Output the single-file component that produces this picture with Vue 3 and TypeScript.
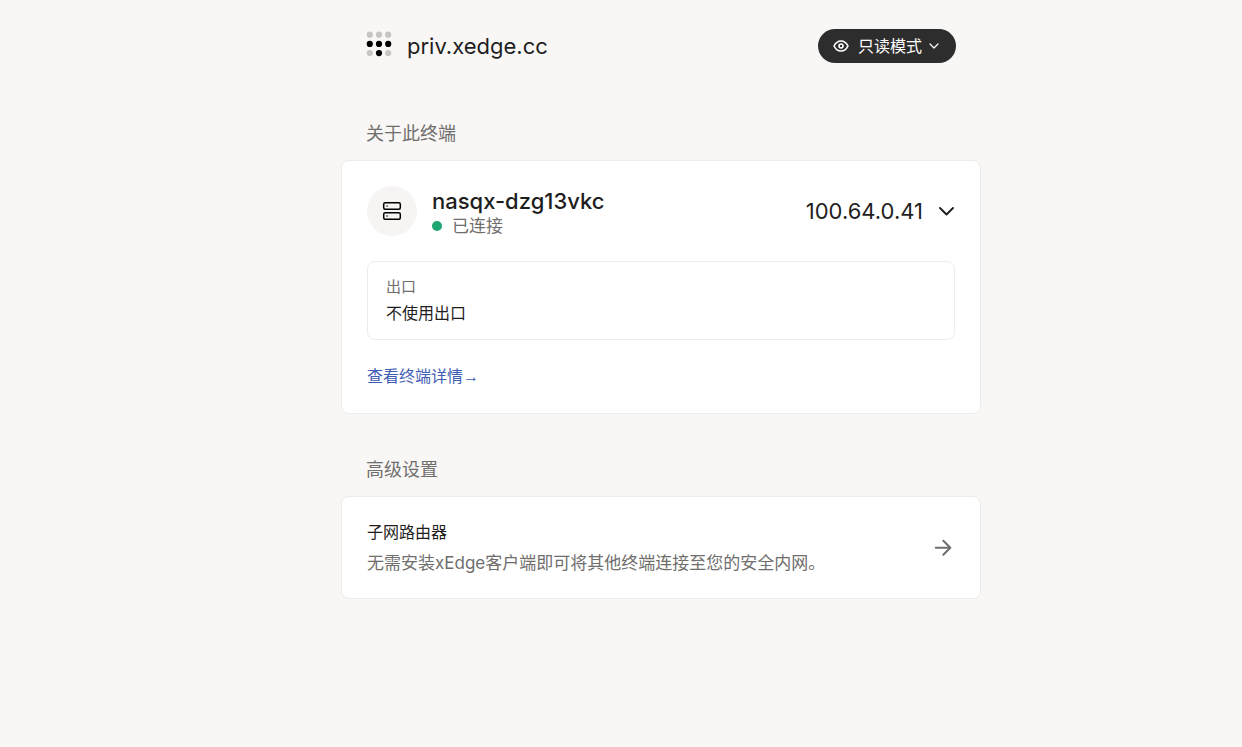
<script setup lang="ts">
import { ref } from 'vue'

interface Dot {
  x: number
  y: number
  active: boolean
}

const domain = ref('priv.xedge.cc')
const device = ref({ name: 'nasqx-dzg13vkc', status: '已连接', address: '100.64.0.41', exit: '不使用出口' })

const activeDots = [3, 4, 5, 7]
const dots: Dot[] = Array.from({ length: 9 }, (_, i) => ({
  x: 3.8 + (i % 3) * 9.2,
  y: 3.7 + Math.floor(i / 3) * 9.2,
  active: activeDots.includes(i),
}))
</script>

<template>
  <main class="page">
    <header class="header">
      <div class="brand">
        <svg class="logo" width="26" height="26" viewBox="0 0 26 26" aria-hidden="true">
          <circle v-for="(dot, i) in dots" :key="i" :cx="dot.x" :cy="dot.y" r="3.1" :opacity="dot.active ? 1 : 0.2" />
        </svg>
        <span class="title">{{ domain }}</span>
      </div>
      <button class="mode" type="button">
        <svg width="16" height="16" viewBox="0 0 24 24" fill="none" stroke="currentColor" stroke-width="2.4" stroke-linecap="round" stroke-linejoin="round" aria-hidden="true">
          <path d="M1.5 12s3.8-7.6 10.5-7.6S22.5 12 22.5 12s-3.8 7.6-10.5 7.6S1.5 12 1.5 12z" />
          <circle cx="12" cy="12" r="3" />
        </svg>
        <span>只读模式</span>
        <svg class="mode-arrow" width="10" height="10" viewBox="0 0 10 10" fill="none" stroke="currentColor" stroke-width="1.2" stroke-linecap="round" stroke-linejoin="round" aria-hidden="true">
          <path d="M1 3l4 4 4-4" />
        </svg>
      </button>
    </header>

    <section>
      <h2 class="heading">关于此终端</h2>
      <div class="card">
        <div class="device">
          <div class="avatar">
            <svg width="20" height="20" viewBox="0 0 20 20" fill="none" stroke="#000" stroke-width="1.5" stroke-linecap="round" stroke-linejoin="round" aria-hidden="true">
              <rect x="1.7" y="1.7" width="16.6" height="6.6" rx="1.5" />
              <rect x="1.7" y="11.7" width="16.6" height="6.6" rx="1.5" />
              <path d="M5 5h.01M5 15h.01" />
            </svg>
          </div>
          <div class="identity">
            <h3 class="name">{{ device.name }}</h3>
            <p class="status"><span class="status-dot"></span>{{ device.status }}</p>
          </div>
          <button class="address" type="button">
            <span>{{ device.address }}</span>
            <svg width="17" height="17" viewBox="0 0 17 17" fill="none" stroke="currentColor" stroke-width="1.9" stroke-linecap="round" stroke-linejoin="round" aria-hidden="true">
              <path d="M2 5l6.5 6.5L15 5" />
            </svg>
          </button>
        </div>
        <button class="exit" type="button">
          <span class="exit-label">出口</span>
          <span class="exit-value">{{ device.exit }}</span>
        </button>
        <a class="details" href="#details">查看终端详情<span class="details-arrow">→</span></a>
      </div>
    </section>

    <section>
      <h2 class="heading">高级设置</h2>
      <a class="card route" href="#subnets">
        <span class="route-text">
          <span class="route-title">子网路由器</span>
          <span class="route-note">无需安装xEdge客户端即可将其他终端连接至您的安全内网。</span>
        </span>
        <svg class="route-arrow" width="24" height="24" viewBox="0 0 24 24" fill="none" stroke="currentColor" stroke-width="2" stroke-linecap="round" stroke-linejoin="round" aria-hidden="true">
          <path d="M4.800 11.700h14.500M12.300 4.700l7 7-7 7" />
        </svg>
      </a>
    </section>
  </main>
</template>

<style>
body {
  background: #f8f7f5;
}
</style>

<style scoped>
* {
  box-sizing: border-box;
}
.page {
  max-width: 720px;
  margin: 0 auto;
  padding: 29px 0 29px 80px;
  font-family: Inter, "Noto Sans CJK SC", sans-serif;
  font-size: 16px;
  line-height: 24px;
  color: #1f1e1e;
}
button {
  font: inherit;
  color: inherit;
  border: 0;
  background: none;
  cursor: pointer;
}
h2,
h3,
p {
  margin: 0;
  font-weight: 400;
}
a {
  text-decoration: none;
}
svg {
  display: block;
  flex: none;
}
.header {
  display: flex;
  align-items: center;
  justify-content: space-between;
  padding: 0 25px;
  margin-bottom: 57px;
}
.brand {
  display: flex;
  align-items: center;
  gap: 15px;
}
.logo {
  margin-bottom: 4px;
}
.title {
  font-size: 22px;
  line-height: 34px;
}
.mode {
  display: flex;
  align-items: center;
  gap: 9px;
  height: 34px;
  padding: 0 17px 0 15px;
  border-radius: 17px;
  background: #2e2d2d;
  color: #fff;
}
.mode-arrow {
  margin-left: -2px;
}
.heading {
  padding: 0 25px;
  margin-bottom: 13px;
  font-size: 18px;
  line-height: 27px;
  color: #706e6d;
}
.card {
  padding: 25px 25px 24px;
  margin-bottom: 42px;
  border: 1px solid #eeebea;
  border-radius: 8px;
  background: #fff;
}
.device {
  display: flex;
  align-items: center;
  margin-bottom: 25px;
}
.avatar {
  display: flex;
  align-items: center;
  justify-content: center;
  width: 50px;
  height: 50px;
  margin-right: 15px;
  border-radius: 50%;
  background: #f7f5f4;
}
.identity {
  flex: 1;
}
.name {
  font-size: 22px;
  line-height: 30px;
  font-weight: 500;
}
.status {
  display: flex;
  align-items: center;
  gap: 10px;
  font-size: 17px;
  line-height: 20px;
  color: #706e6d;
}
.status-dot {
  width: 10px;
  height: 10px;
  border-radius: 50%;
  background: #1ea672;
}
.address {
  display: flex;
  align-items: center;
  gap: 15px;
  padding: 0;
  font-size: 22px;
}
.exit {
  display: flex;
  flex-direction: column;
  align-items: flex-start;
  width: 100%;
  padding: 12px 18px;
  margin-bottom: 24px;
  border: 1px solid #eeebea;
  border-radius: 8px;
  text-align: left;
}
.exit-label {
  font-size: 15px;
  line-height: 26px;
  color: #706e6d;
}
.exit-value {
  line-height: 27px;
}
.details {
  display: inline-block;
  color: #3f5db3;
}
.details-arrow {
  font-family: "Liberation Sans", sans-serif;
}
.route {
  display: flex;
  align-items: center;
  justify-content: space-between;
  padding: 20px 25px;
  color: #1f1e1e;
}
.route-text {
  display: flex;
  flex-direction: column;
  gap: 2px;
}
.route-title {
  line-height: 30px;
}
.route-note {
  font-size: 17px;
  line-height: 29px;
  color: #706e6d;
}
.route-arrow {
  color: #706e6d;
}
</style>
